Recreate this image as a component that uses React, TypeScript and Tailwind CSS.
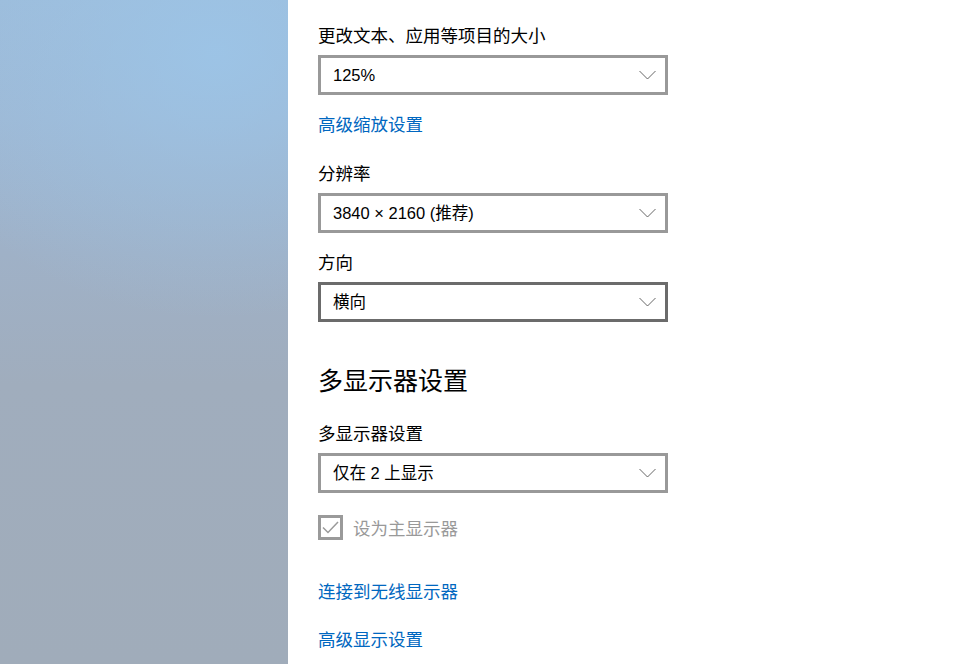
const FONT = { fontFamily: '"Noto Sans CJK SC", "Noto Sans", sans-serif' };
const VALUE_FONT = { fontFamily: '"Liberation Sans", "Noto Sans CJK SC", sans-serif' };

function Combo({ value, active = false }: { value: string; active?: boolean }) {
  return (
    <div
      className={`w-[350px] h-[40px] border-[3px] bg-white flex items-center justify-between pl-[12px] pr-[9px] ${
        active ? 'border-[#6b6b6b]' : 'border-[#999999]'
      }`}
    >
      <span className="text-[16.5px] leading-[24px] text-black" style={VALUE_FONT}>{value}</span>
      <svg width="17" height="10" viewBox="0 0 17 10">
        <path d="M0.5 1 L8.5 9 L16.5 1" fill="none" stroke="#555" strokeWidth="0.9" />
      </svg>
    </div>
  );
}

function Label({ children, className = '' }: { children: string; className?: string }) {
  return <div className={`text-[17.5px] leading-[24px] text-black ${className}`}>{children}</div>;
}

function Link({ children, className = '' }: { children: string; className?: string }) {
  return <div className={`text-[17.5px] leading-[24px] text-[#0067c0] ${className}`}>{children}</div>;
}

export default function App() {
  return (
    <div className="w-[963px] h-[664px] flex bg-white overflow-hidden" style={FONT}>
      <div className="w-[288px] h-full shrink-0 bg-[radial-gradient(ellipse_110%_40%_at_75%_8%,rgba(156,197,232,0.85)_0%,rgba(156,197,232,0.4)_45%,rgba(156,197,232,0)_100%),linear-gradient(to_bottom,#9dbcda_0%,#9eb8d4_18%,#9fb1c7_38%,#a0adbd_58%,#a0acba_100%)]" />
      <div className="flex-1 pl-[30px] pt-[23px] flex flex-col items-start">
        <Label className="mb-[8px]">更改文本、应用等项目的大小</Label>
        <Combo value="125%" />
        <Link className="mt-[17px]">高级缩放设置</Link>
        <Label className="mt-[25px] mb-[8px]">分辨率</Label>
        <Combo value="3840 × 2160 (推荐)" />
        <Label className="mt-[17px] mb-[8px]">方向</Label>
        <Combo value="横向" active />
        <div className="mt-[40px] text-[25px] leading-[34px] text-black">多显示器设置</div>
        <Label className="mt-[25px] mb-[8px]">多显示器设置</Label>
        <Combo value="仅在 2 上显示" />
        <div className="mt-[22px] flex items-center gap-[10px]">
          <svg width="25" height="25" viewBox="0 0 25 25">
            <rect x="1.5" y="1.5" width="22" height="22" fill="white" stroke="#9a9a9a" strokeWidth="3" />
            <path d="M5 12.5 L10 17.5 L20 7" fill="none" stroke="#9a9a9a" strokeWidth="1.5" />
          </svg>
          <span className="text-[17.5px] leading-[24px] text-[#999]">设为主显示器</span>
        </div>
        <Link className="mt-[39px]">连接到无线显示器</Link>
        <Link className="mt-[24px]">高级显示设置</Link>
      </div>
    </div>
  );
}
